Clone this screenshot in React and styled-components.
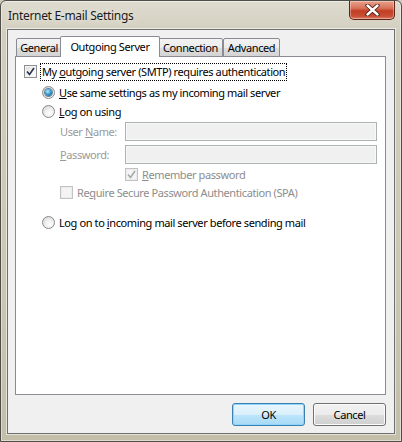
import React from "react";
import styled, { createGlobalStyle } from "styled-components";

const GlobalStyle = createGlobalStyle`
  html, body {
    margin: 0;
    padding: 0;
    background: #cfcbb9;
  }
  * {
    box-sizing: border-box;
  }
`;

const Window = styled.div`
  width: 402px;
  height: 442px;
  display: flex;
  flex-direction: column;
  padding: 0 6px 7px 6px;
  border: 1px solid #4e4d48;
  border-radius: 6px 6px 0 0;
  background: linear-gradient(180deg, #dedbcf 0%, #d2cebd 8%, #cbc7b3 60%, #c3bea8 100%);
  box-shadow: inset 0 0 0 1px rgba(255, 255, 255, 0.45);
  font-family: "Noto Sans", "Liberation Sans", sans-serif;
  font-size: 11px;
  letter-spacing: -0.4px;
  color: #000;
`;

const TitleBar = styled.div`
  height: 28px;
  display: flex;
  align-items: flex-start;
  justify-content: space-between;
  flex-shrink: 0;
`;

const Title = styled.div`
  padding: 6px 0 0 1px;
  font-size: 12px;
  letter-spacing: -0.3px;
  color: #1b1b1b;
  text-shadow: 0 0 6px rgba(255, 255, 255, 0.9);
`;

const CloseButton = styled.div`
  width: 46px;
  height: 19px;
  display: flex;
  align-items: center;
  justify-content: center;
  border: 1px solid #5d2418;
  border-top: none;
  border-radius: 0 0 5px 5px;
  background: linear-gradient(180deg, #e9a08c 0%, #d8725a 40%, #c23e24 55%, #c84f35 85%, #db8068 100%);
  box-shadow: inset 0 0 0 1px rgba(255, 255, 255, 0.35);
`;

const Client = styled.div`
  flex: 1;
  display: flex;
  flex-direction: column;
  padding: 7px 8px 0 7px;
  background: #f0f0f0;
  border: 1px solid #6f6f6f;
  box-shadow: 0 0 0 1px rgba(255, 255, 255, 0.55);
`;

const TabStrip = styled.div`
  height: 20px;
  display: flex;
  align-items: flex-end;
  padding-left: 1px;
  position: relative;
  z-index: 2;
  margin-bottom: -1px;
`;

const Tab = styled.div`
  width: ${(p) => p.$w}px;
  height: ${(p) => (p.$active ? 21 : 19)}px;
  margin: 0 ${(p) => (p.$active ? -2 : 0)}px;
  display: flex;
  align-items: flex-start;
  justify-content: center;
  padding-top: ${(p) => (p.$active ? 2 : 1)}px;
  border: 1px solid #898c95;
  border-bottom: ${(p) => (p.$active ? "none" : "1px solid #898c95")};
  border-radius: 2px 2px 0 0;
  background: ${(p) =>
    p.$active
      ? "#ffffff"
      : "linear-gradient(180deg, #f3f3f3 0%, #ebebeb 50%, #dedede 50%, #d4d4d4 100%)"};
  position: relative;
  z-index: ${(p) => (p.$active ? 1 : 0)};
  white-space: nowrap;
`;

const Panel = styled.div`
  height: 339px;
  display: flex;
  flex-direction: column;
  padding: 6px 0 0 8px;
  background: #ffffff;
  border: 1px solid #898c95;
`;

const Row = styled.div`
  height: 17px;
  display: flex;
  align-items: center;
  gap: 4px;
  margin-left: ${(p) => p.$indent || 0}px;
  margin-top: ${(p) => p.$mt || 0}px;
  color: ${(p) => (p.$disabled ? "#8d8d8d" : "#000")};
  white-space: nowrap;
`;

const FocusLabel = styled.span`
  outline: 1px dotted #000;
  outline-offset: 0;
  padding: 0 1px;
  line-height: 16px;
`;

const FieldRow = styled.div`
  height: 19px;
  display: flex;
  align-items: center;
  margin-left: 36px;
  margin-top: ${(p) => p.$mt || 0}px;
  white-space: nowrap;
`;

const FieldLabel = styled.span`
  width: 65px;
  flex-shrink: 0;
  color: #9a9a9a;
`;

const TextBox = styled.div`
  width: 252px;
  height: 19px;
  background: #f0f0f0;
  border: 1px solid #adb2b5;
  box-shadow: inset 0 0 0 1px #f8f8f8;
`;

const Box = styled.span`
  width: 13px;
  height: 13px;
  flex-shrink: 0;
  display: flex;
  align-items: center;
  justify-content: center;
  border: 1px solid ${(p) => (p.$disabled ? "#c2c2c2" : "#8e8f8f")};
  background: ${(p) =>
    p.$disabled
      ? "#f4f4f4"
      : "linear-gradient(135deg, #dcdcdc 0%, #f0f0f0 50%, #ffffff 100%)"};
  box-shadow: inset 0 0 0 1px ${(p) => (p.$disabled ? "#ececec" : "#f4f4f4")};
`;

const RadioDot = styled.span`
  width: 13px;
  height: 13px;
  flex-shrink: 0;
  border-radius: 50%;
  display: flex;
  align-items: center;
  justify-content: center;
  border: 1px solid #8a8a8a;
  background: radial-gradient(circle at 60% 65%, #ffffff 0%, #f0f0f0 40%, #cfcfcf 100%);
`;

const RadioFill = styled.span`
  width: 7px;
  height: 7px;
  border-radius: 50%;
  background: radial-gradient(circle at 40% 35%, #b9ecff 0%, #3aa0d4 45%, #0b3e63 100%);
  box-shadow: 0 0 0 1px rgba(10, 60, 100, 0.6);
`;

const ButtonBar = styled.div`
  display: flex;
  justify-content: flex-end;
  gap: 8px;
  margin-top: 8px;
`;

const Button = styled.div`
  width: 73px;
  height: 23px;
  display: flex;
  align-items: center;
  justify-content: center;
  border-radius: 3px;
  border: 1px solid ${(p) => (p.$primary ? "#3c7fb1" : "#707070")};
  background: ${(p) =>
    p.$primary
      ? "linear-gradient(180deg, #eaf6fd 0%, #d9f0fc 50%, #bee6fd 50%, #a7d9f5 100%)"
      : "linear-gradient(180deg, #f2f2f2 0%, #ebebeb 50%, #dddddd 50%, #cfcfcf 100%)"};
  box-shadow: inset 0 0 0 1px ${(p) => (p.$primary ? "#8fd6ff" : "#fcfcfc")};
`;

const CheckMark = ({ color }) => (
  <svg width="9" height="9" viewBox="0 0 9 9">
    <path d="M1 4.5 L3.5 7.5 L8 1" fill="none" stroke={color} strokeWidth="1.6" />
  </svg>
);

const CloseX = () => (
  <svg width="15" height="12" viewBox="0 0 15 12">
    <path
      d="M2.5 1.5 L12.5 10.5 M12.5 1.5 L2.5 10.5"
      stroke="#4a1a12"
      strokeWidth="4.2"
      strokeLinecap="round"
    />
    <path
      d="M2.5 1.5 L12.5 10.5 M12.5 1.5 L2.5 10.5"
      stroke="#ffffff"
      strokeWidth="2.4"
      strokeLinecap="round"
    />
  </svg>
);

const Checkbox = ({ checked, disabled }) => (
  <Box $disabled={disabled}>
    {checked && <CheckMark color={disabled ? "#a8a8a8" : "#27324f"} />}
  </Box>
);

const Radio = ({ checked }) => <RadioDot>{checked && <RadioFill />}</RadioDot>;

const tabs = [
  { label: "General", w: 46 },
  { label: "Outgoing Server", w: 100, active: true },
  { label: "Connection", w: 65 },
  { label: "Advanced", w: 57 },
];

export default function App() {
  return (
    <>
      <GlobalStyle />
      <Window>
        <TitleBar>
          <Title>Internet E-mail Settings</Title>
          <CloseButton>
            <CloseX />
          </CloseButton>
        </TitleBar>
        <Client>
          <TabStrip>
            {tabs.map((t) => (
              <Tab key={t.label} $w={t.w} $active={t.active}>
                {t.label}
              </Tab>
            ))}
          </TabStrip>
          <Panel>
            <Row>
              <Checkbox checked />
              <FocusLabel>
                My <u>o</u>utgoing server (SMTP) requires authentication
              </FocusLabel>
            </Row>
            <Row $indent={18} $mt={4}>
              <Radio checked />
              <span>
                <u>U</u>se same settings as my incoming mail server
              </span>
            </Row>
            <Row $indent={18} $mt={2}>
              <Radio />
              <span>
                <u>L</u>og on using
              </span>
            </Row>
            <FieldRow $mt={2}>
              <FieldLabel>
                User <u>N</u>ame:
              </FieldLabel>
              <TextBox />
            </FieldRow>
            <FieldRow $mt={4}>
              <FieldLabel>
                <u>P</u>assword:
              </FieldLabel>
              <TextBox />
            </FieldRow>
            <Row $indent={101} $mt={2} $disabled>
              <Checkbox checked disabled />
              <span>
                <u>R</u>emember password
              </span>
            </Row>
            <Row $indent={36} $mt={1} $disabled>
              <Checkbox disabled />
              <span>
                Re<u>q</u>uire Secure Password Authentication (SPA)
              </span>
            </Row>
            <Row $indent={18} $mt={13}>
              <Radio />
              <span>
                Log on to <u>i</u>ncoming mail server before sending mail
              </span>
            </Row>
          </Panel>
          <ButtonBar>
            <Button $primary>OK</Button>
            <Button>Cancel</Button>
          </ButtonBar>
        </Client>
      </Window>
    </>
  );
}
